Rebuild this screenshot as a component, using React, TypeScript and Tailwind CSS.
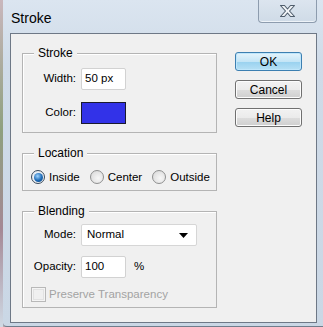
import type { FC, ReactNode } from "react";

const font = { fontFamily: '"Liberation Sans", Arial, sans-serif' };

const Group: FC<{ title: string; className?: string; children: ReactNode }> = ({ title, className, children }) => (
    <div className={`relative border border-[#b4b4b4] shadow-[inset_1px_1px_0_#ffffff] ${className ?? ""}`}>
        <span className="absolute left-[11px] top-[-9px] bg-[#f0f0f0] px-[4px] text-[12px] leading-[16px] text-black">{title}</span>
        {children}
    </div>
);

const Radio: FC<{ label: string; checked?: boolean }> = ({ label, checked }) => (
    <div className="flex items-center gap-[4px]">
        {checked ? (
            <div className="w-[14px] h-[14px] rounded-full border border-[#3a4a5a] bg-[#e9eef3] flex items-center justify-center">
                <div className="w-[9px] h-[9px] rounded-full bg-[radial-gradient(circle_at_40%_35%,#9fd4ff,#1a68b4_55%,#0d3f78)]" />
            </div>
        ) : (
            <div className="w-[14px] h-[14px] rounded-full border border-[#8e8f8f] bg-[radial-gradient(circle_at_60%_60%,#f7f7f7,#d6d6d6)]" />
        )}
        <span className="text-[11.5px] leading-[14px] text-black">{label}</span>
    </div>
);

const Button: FC<{ label: string; primary?: boolean }> = ({ label, primary }) => (
    <div
        className={`w-[67px] h-[19px] rounded-[3px] border flex items-center justify-center text-[12px] text-black ${primary
            ? "border-[#3c7fb1] bg-[linear-gradient(#e5f4fc_0%,#c4e5f6_50%,#98d1ef_51%,#b6e0f5_100%)] shadow-[inset_0_0_0_1px_#bfe6fb]"
            : "border-[#707070] bg-[linear-gradient(#f2f2f2_0%,#ebebeb_50%,#dddddd_51%,#cfcfcf_100%)] shadow-[inset_0_0_0_1px_#fcfcfc]"}`}
    >
        {label}
    </div>
);

const App: FC = () => {
    return (
        <div className="w-[323px] h-[327px] flex bg-[#b9a9ae] overflow-hidden" style={font}>
            {/* bit of the desktop behind the window */}
            <div className="w-[3px] bg-[linear-gradient(#c9b7bd,#8ea07e_40%,#a48895_70%,#cfd9e4)]" />
            <div className="flex-1 flex flex-col rounded-bl-[4px] bg-[linear-gradient(#dbe5f0,#cfdbe8_20%,#cad7e5)] border-b border-[#6f7d8c]">
                {/* title bar */}
                <div className="h-[33px] flex justify-between pl-[8px] pr-[6px]">
                    <span className="pt-[9px] text-[14px] leading-[18px] text-black">Stroke</span>
                    <div className="w-[59px] h-[23px] rounded-b-[4px] border border-t-0 border-[#8d9cae] bg-[linear-gradient(#dce5ef,#cfdbe7)] shadow-[inset_0_-1px_0_#eef3f8] flex items-center justify-center">
                        <svg width="17" height="14" viewBox="0 0 17 14">
                            <path d="M1.5 1.5H5.5L8.5 5L11.5 1.5H15.5L10.5 7L15.5 12.5H11.5L8.5 9L5.5 12.5H1.5L6.5 7Z" fill="#f2f5f8" stroke="#4f5d6c" strokeWidth="1.1" strokeLinejoin="round" />
                        </svg>
                    </div>
                </div>
                {/* client area */}
                <div className="ml-[7px] mr-[6px] h-[290px] border border-[#6e7886] bg-[#f0f0f0] flex gap-[18px] pl-[11px]">
                    <div className="w-[195px] flex flex-col gap-[20px] pt-[19px]">
                        <Group title="Stroke" className="h-[80px]">
                            <div className="flex flex-col gap-[12px] pt-[14px] text-[11.5px] text-black">
                                <div className="flex items-center gap-[5px]">
                                    <span className="w-[53px] text-right">Width:</span>
                                    <div className="w-[45px] h-[22px] rounded-[2px] border border-[#d2d2d2] bg-white pl-[3px] flex items-center">50 px</div>
                                </div>
                                <div className="flex items-center gap-[5px]">
                                    <span className="w-[53px] text-right">Color:</span>
                                    <div className="w-[45px] h-[22px] border border-[#1a1a2e] bg-[#3232e8]" />
                                </div>
                            </div>
                        </Group>
                        <Group title="Location" className="h-[38px]">
                            <div className="flex items-center pt-[16px] pl-[8px] gap-[10px]">
                                <Radio label="Inside" checked />
                                <Radio label="Center" />
                                <Radio label="Outside" />
                            </div>
                        </Group>
                        <Group title="Blending" className="h-[97px]">
                            <div className="flex flex-col pt-[12px] text-[11.5px] text-black">
                                <div className="flex items-center gap-[5px]">
                                    <span className="w-[53px] text-right">Mode:</span>
                                    <div className="w-[116px] h-[22px] rounded-[2px] border border-[#d6d6d6] bg-white pl-[5px] pr-[8px] flex items-center justify-between">
                                        <span>Normal</span>
                                        <svg width="9" height="5" viewBox="0 0 9 5">
                                            <path d="M0 0H9L4.5 5Z" fill="#000" />
                                        </svg>
                                    </div>
                                </div>
                                <div className="flex items-center gap-[5px] mt-[10px]">
                                    <span className="w-[53px] text-right">Opacity:</span>
                                    <div className="w-[45px] h-[22px] rounded-[2px] border border-[#d2d2d2] bg-white pl-[3px] flex items-center">100</div>
                                    <span className="ml-[3px]">%</span>
                                </div>
                                <div className="flex items-center gap-[3px] mt-[8px] pl-[8px]">
                                    <div className="w-[15px] h-[15px] border border-[#b8b8b8] bg-[#f4f4f4] p-[1px]">
                                        <div className="w-full h-full border border-[#e2e2e2] bg-[#f0f0f0]" />
                                    </div>
                                    <span className="text-[#a3a3a3]">Preserve Transparency</span>
                                </div>
                            </div>
                        </Group>
                    </div>
                    <div className="flex flex-col gap-[9px] pt-[18px]">
                        <Button label="OK" primary />
                        <Button label="Cancel" />
                        <Button label="Help" />
                    </div>
                </div>
            </div>
        </div>
    );
};

export default App;
